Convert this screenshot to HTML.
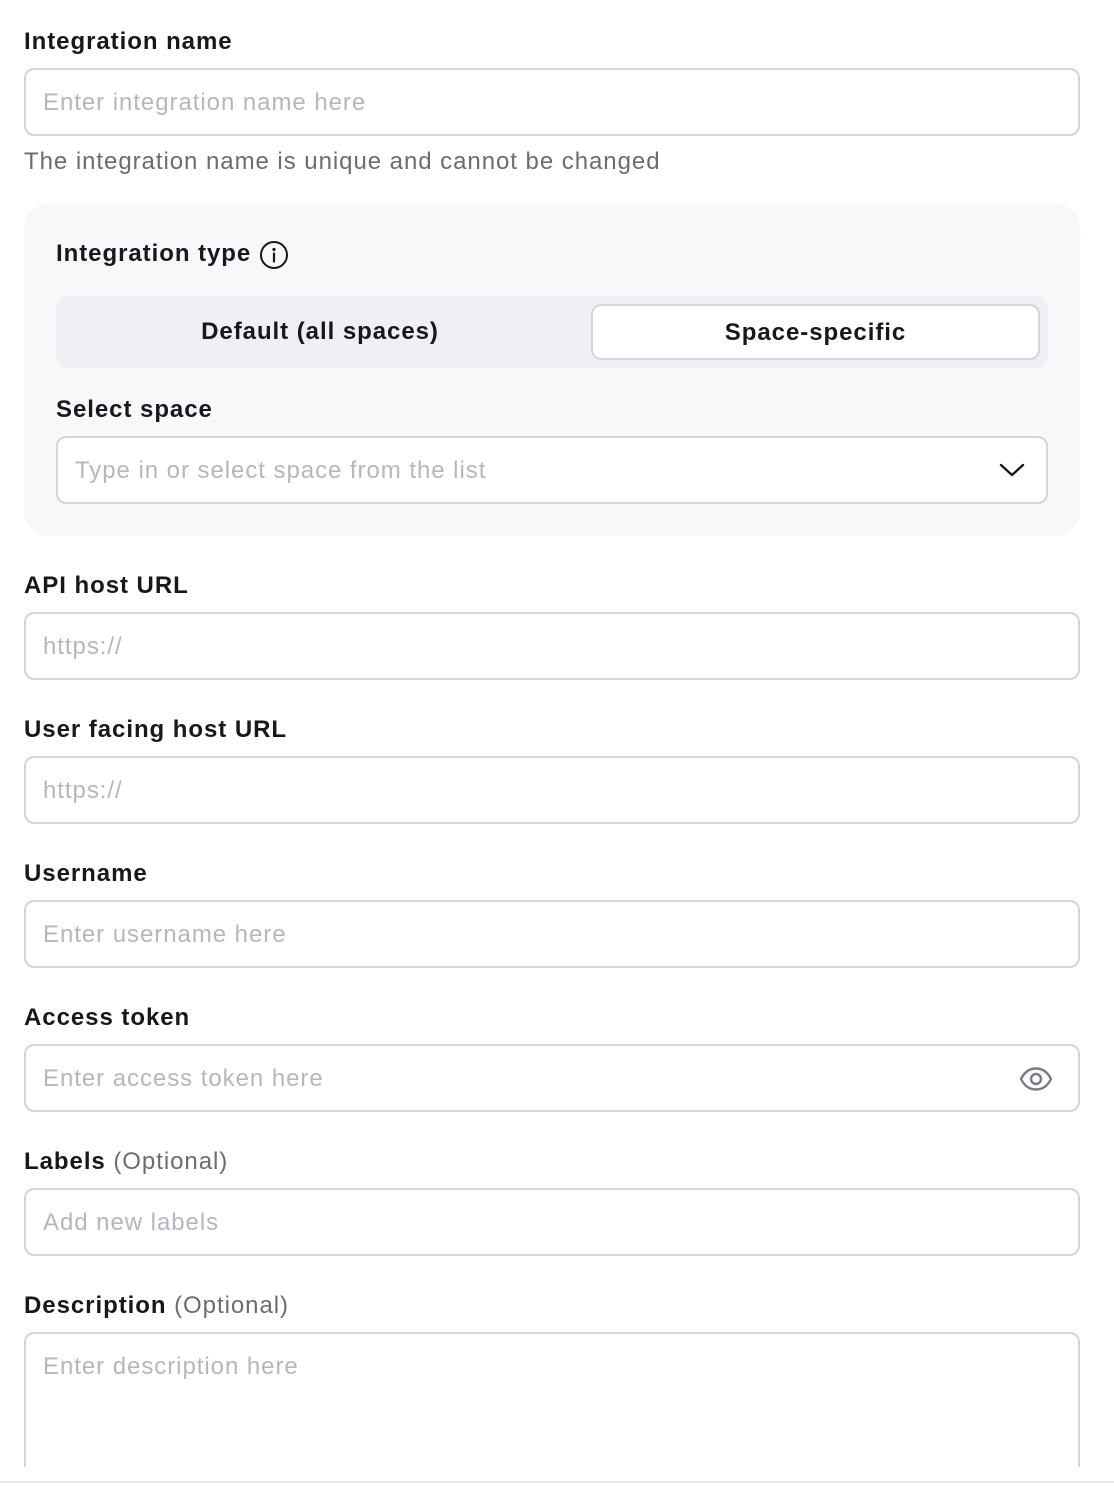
<!DOCTYPE html>
<html><head><meta charset="utf-8"><style>
*{box-sizing:border-box;margin:0;padding:0}
body{width:1114px;height:1512px;background:#fff;position:relative;overflow:hidden;font-family:"Liberation Sans",sans-serif;color:#17171c;letter-spacing:0.95px}
.a{position:absolute}
.lbl{position:absolute;left:24px;font-size:24px;font-weight:bold;line-height:28px}
.opt{font-weight:normal;color:#6b6b75}
.inp{position:absolute;left:24px;width:1056px;height:68px;border:2px solid #d3d3d9;border-radius:10px;background:#fff}
.ph{position:absolute;left:17px;top:19px;font-size:24px;line-height:28px;color:#b6b6be}
</style></head><body>
<div class="lbl" style="top:28px">Integration name</div>
<div class="inp" style="top:68px"><div class="ph">Enter integration name here</div></div>
<div class="a" style="left:24px;top:148px;font-size:24px;line-height:28px;color:#6b6b75">The integration name is unique and cannot be changed</div>

<div class="a" style="left:24px;top:204px;width:1056px;height:332px;background:#f7f8fa;border-radius:24px"></div>
<div class="lbl" style="left:56px;top:240px">Integration type</div>
<svg class="a" style="left:259px;top:240px" width="30" height="30" viewBox="0 0 30 30"><circle cx="15" cy="15" r="13" fill="none" stroke="#17171c" stroke-width="2"/><circle cx="15" cy="9.5" r="1.6" fill="#17171c"/><path d="M15 13.5v8" stroke="#17171c" stroke-width="2.2" stroke-linecap="round"/></svg>
<div class="a" style="left:56px;top:296px;width:992px;height:72px;background:#eff0f3;border-radius:12px"></div>
<div class="a" style="left:56px;top:317px;width:528px;text-align:center;font-size:24px;font-weight:bold;line-height:30px">Default (all spaces)</div>
<div class="a" style="left:591px;top:304px;width:449px;height:56px;background:#fff;border:2px solid #d3d3d9;border-radius:10px;text-align:center;font-size:24px;font-weight:bold;line-height:53px">Space-specific</div>
<div class="lbl" style="left:56px;top:396px">Select space</div>
<div class="inp" style="left:56px;width:992px;top:436px"><div class="ph">Type in or select space from the list</div>
<svg class="a" style="left:940px;top:22px" width="28" height="20" viewBox="0 0 28 20"><path d="M3 5l11 10L25 5" fill="none" stroke="#17171c" stroke-width="2.4" stroke-linecap="round" stroke-linejoin="round"/></svg></div>

<div class="lbl" style="top:572px">API host URL</div>
<div class="inp" style="top:612px"><div class="ph">https://</div></div>
<div class="lbl" style="top:716px">User facing host URL</div>
<div class="inp" style="top:756px"><div class="ph">https://</div></div>
<div class="lbl" style="top:860px">Username</div>
<div class="inp" style="top:900px"><div class="ph">Enter username here</div></div>
<div class="lbl" style="top:1004px">Access token</div>
<div class="inp" style="top:1044px"><div class="ph">Enter access token here</div>
<svg class="a" style="left:992px;top:20px" width="36" height="26" viewBox="0 0 36 26"><path d="M3 13C7 5 12 2.5 18 2.5S29 5 33 13C29 21 24 23.5 18 23.5S7 21 3 13Z" fill="none" stroke="#7b7b85" stroke-width="2.4" stroke-linejoin="round"/><circle cx="18" cy="13" r="5" fill="none" stroke="#7b7b85" stroke-width="2.4"/></svg></div>
<div class="lbl" style="top:1148px">Labels <span class="opt">(Optional)</span></div>
<div class="inp" style="top:1188px"><div class="ph">Add new labels</div></div>
<div class="lbl" style="top:1292px">Description <span class="opt">(Optional)</span></div>
<div class="inp" style="top:1332px;height:160px"><div class="ph">Enter description here</div></div>
<div class="a" style="left:0;top:1467px;width:1114px;height:45px;background:#fff"></div>
<div class="a" style="left:0;top:1481px;width:1114px;height:2px;background:#e6e6ec"></div>
</body></html>
